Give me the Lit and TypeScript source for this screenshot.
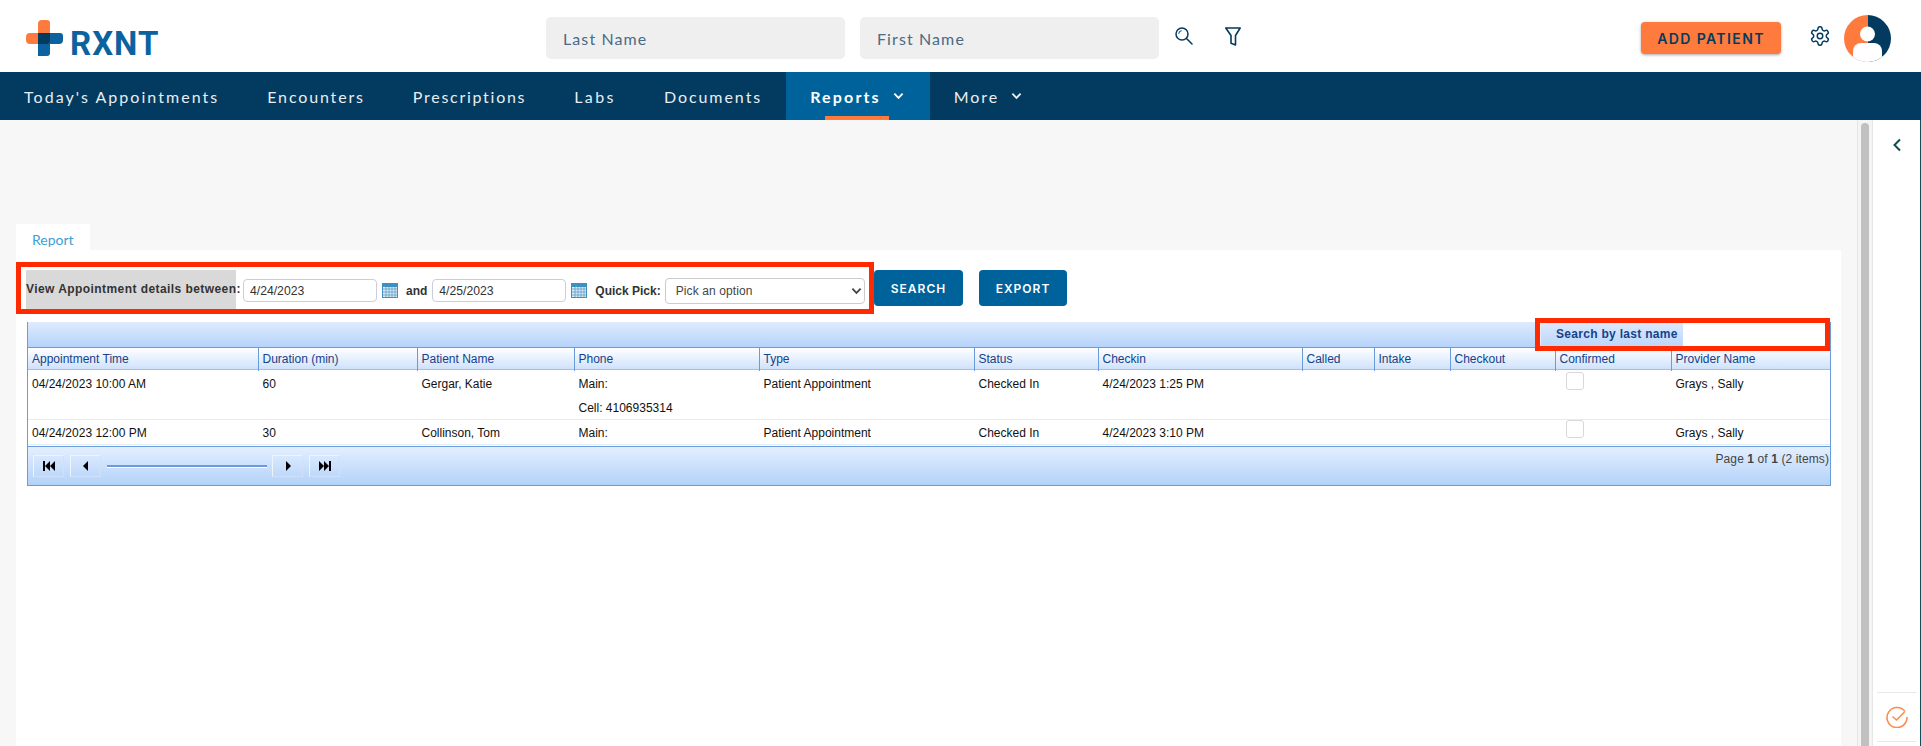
import { LitElement, html, css, svg } from "lit";
import { customElement } from "lit/decorators.js";

const NAV = [
  { t: "Today's Appointments", ls: 2.04 },
  { t: "Encounters", ls: 1.85 },
  { t: "Prescriptions", ls: 1.72 },
  { t: "Labs", ls: 2.4 },
  { t: "Documents", ls: 1.95 },
];
const COLS = ["Appointment Time", "Duration (min)", "Patient Name", "Phone", "Type", "Status", "Checkin", "Called", "Intake", "Checkout", "Confirmed", "Provider Name"];
const ROWS = [
  { time: "04/24/2023 10:00 AM", dur: "60", name: "Gergar, Katie", phone: ["Main:", "Cell: 4106935314"], checkin: "4/24/2023 1:25 PM" },
  { time: "04/24/2023 12:00 PM", dur: "30", name: "Collinson, Tom", phone: ["Main:"], checkin: "4/24/2023 3:10 PM" },
];

const chevron = html`<svg class="chev" viewBox="0 0 12 8" width="11" height="8"><path d="M1.5 1.5 6 6l4.5-4.5" fill="none" stroke="currentColor" stroke-width="2"/></svg>`;
const calendar = html`<svg class="cal" viewBox="0 0 16 15" width="16" height="15">
  <rect x=".5" y=".5" width="15" height="14" fill="#dcecf6" stroke="#3f8fc0"/>
  <rect x="1" y="1" width="14" height="3" fill="#3f8fc0"/>
  ${[6, 9, 12].map((y) => svg`<path d="M1 ${y}h14" stroke="#6fa9cf"/>`)}
  ${[4, 7, 10, 13].map((x) => svg`<path d="M${x} 4v10" stroke="#6fa9cf"/>`)}
</svg>`;

const pagerIcon = (d: string) => html`<button class="pg"><svg viewBox="0 0 12 10" width="12" height="10"><path d="${d}" fill="#000"/></svg></button>`;

@customElement("app-root")
export class AppRoot extends LitElement {
  static styles = css`
    :host { display: flex; flex-direction: column; width: 1921px; height: 746px; overflow: hidden; background: #fff; font-family: "Liberation Sans", Arial, sans-serif; font-size: 12px; }
    * { box-sizing: border-box; }
    .top { flex: 0 0 72px; display: flex; align-items: flex-start; padding: 0 30px 0 26px; background: #fff; }
    .logo { display: flex; align-items: flex-end; width: 520px; padding-top: 20px; height: 56px; gap: 7px; }
    .logo-text { font: 700 33px/24px Roboto, sans-serif; color: #0a639f; height: 24px; letter-spacing: 1px; }
    .name { width: 299px; height: 42px; margin-top: 17px; margin-right: 15px; background: #efefef; border: 0; border-radius: 5px; padding: 0 17px; font: 400 16px Lato, sans-serif; letter-spacing: 1.1px; color: #4a6a85; }
    .name::placeholder { color: #4a6a85; opacity: 1; }
    .ic-search { margin: 27px 0 0 1px; color: #033a5f; }
    .ic-filter { margin: 27px 0 0 32px; color: #033a5f; }
    .add { margin: 22px 0 0 auto; width: 140px; height: 32px; border: 0; border-radius: 4px; background: #ff7a3d; color: #033a5f; font: 600 14px Inter, sans-serif; letter-spacing: 1.4px; box-shadow: 0 1px 3px rgba(0,0,0,.35); padding: 0; }
    .ic-gear { margin: 25px 13px 0 28px; color: #033a5f; }
    .avatar { margin-top: 15px; }

    .nav { flex: 0 0 48px; display: flex; background: #033a5f; color: #e8eef3; font: 400 16px Lato, sans-serif; }
    .nav a { display: flex; align-items: center; padding: 0 24px; height: 48px; position: relative; white-space: nowrap; letter-spacing: 1.95px; }
    .nav a .chev { margin-left: 12px; }
    .nav a.on { background: #00629b; color: #fff; font-weight: 700; padding: 0 26px 0 24px; letter-spacing: 2.15px; }
    .nav a.on::after { content: ""; position: absolute; left: 39px; bottom: 0; width: 64px; height: 4px; background: #ff7a3d; }
    .chev { flex: none; }

    .body { flex: 1; display: flex; min-height: 0; }
    .main { flex: 0 0 1857px; display: flex; flex-direction: column; padding: 104px 16px 0; background: #f7f7f7; }
    .tab { width: 74px; height: 26px; background: #fff; padding: 7px 0 0 16px; color: #3ba0d8; font: 400 14px Lato, sans-serif; }
    .panel { flex: 1; background: #fff; padding-top: 12px; }
    .filter { display: flex; align-items: center; }
    .box { width: 858px; height: 52px; border: 5px solid #ff2a00; padding: 5px 0 0 5px; display: flex; align-items: center; color: #333; font-weight: 700; }
    .lbl { background: #d9d9d9; width: 210px; height: 39px; flex: none; line-height: 38px; white-space: nowrap; letter-spacing: .43px; align-self: flex-start; margin-top: -2px; }
    .date { height: 23px; border: 1px solid #ccd; border-radius: 4px; width: 134px; padding: 0 3px 0 6px; font: 400 12.2px "Liberation Sans", sans-serif; color: #333; }
    .d1 { margin-left: 7px; }
    .cal { margin: 0 0 0 5px; flex: none; }
    .and { margin: 0 5px 0 8px; }
    .qp { margin: 0 4px 0 8px; white-space: nowrap; }
    .sel { position: relative; flex: none; width: 200px; height: 26px; }
    select { appearance: none; width: 100%; height: 100%; border: 1px solid #ccc; border-radius: 4px; background: #fff; padding: 0 0 0 10px; font: 400 12px "Liberation Sans", sans-serif; color: #444; letter-spacing: .1px; }
    .sel .chev { position: absolute; right: 3px; top: 9px; color: #444; pointer-events: none; }
    .act { height: 36px; width: 89px; border: 0; border-radius: 4px; background: #00629b; color: #fff; font: 600 12px Inter, sans-serif; letter-spacing: 1px; padding: 0; }
    .act.e { margin-left: 16px; width: 88px; }

    .grid { position: relative; margin: 8px 0 0 11px; width: 1804px; border: 1px solid #6a9bdc; border-top: 0; color: #111; }
    .tool { height: 25px; background: linear-gradient(#deebfd, #b5d3fb); }
    .row { display: grid; grid-template-columns: 230px 159px 157px 185px 215px 124px 204px 72px 76px 105px 116px 159px; }
    .head { height: 23px; border-top: 1px solid #6a9bdc; border-bottom: 1px solid #9dc0ee; background: linear-gradient(#fff, #cfe2fb); color: #15428b; line-height: 23px; }
    .head span { padding-left: 3.5px; border-left: 1px solid #6a9bdc; white-space: nowrap; }
    .head span:first-child { border-left: 0; padding-left: 4px; }
    .cell { padding-left: 3.5px; line-height: 24px; padding-top: 2px; border-left: 1px solid transparent; white-space: nowrap; }
    .cell:first-child { border-left: 0; padding-left: 4px; }
    .r1 { height: 50px; border-bottom: 1px solid #e3edf7; }
    .r2 { height: 26px; }
    .r2 .cell { padding-top: 1px; height: 25px; border-bottom: 1px solid #e3edf7; }
    .r2 .cell.ck { padding-top: 0; }
    .cell.ck { padding-top: 2px; line-height: 0; }
    .cell input { appearance: none; display: block; margin: 0 0 0 6px; width: 18px; height: 18px; border: 1px solid #d8d8d8; border-radius: 3px; background: #fff; }
    .pager { height: 39px; border-top: 1px solid #6a9bdc; background: linear-gradient(#e4effe, #b3d2fa); display: flex; padding: 8px 0 0 5px; }
    .pg { width: 31px; height: 22px; border: 1px solid; border-color: #edf4fe #cfe1fa #cfe1fa #edf4fe; background: transparent; padding: 0; display: flex; align-items: center; justify-content: center; margin-right: 6px; }
    .track { width: 160px; height: 3px; background: #6a9bdc; border-bottom: 1px solid #fff; margin: 10px 5px 0 0; }
    .info { margin-left: auto; color: #444; padding: 0 1px 0 0; line-height: 24px; margin-top: -8px; letter-spacing: .1px; }
    .srch { position: absolute; left: 1507px; top: -4px; width: 295px; height: 33px; border: 5px solid #ff2a00; display: flex; }
    .srch label { width: 143px; flex: none; background: linear-gradient(#dce9fd, #bcd6fb); border-left: 1px solid #e8f1fe; padding-left: 15px; color: #15428b; font-weight: 700; line-height: 23px; white-space: nowrap; letter-spacing: .3px; }
    .srch input { flex: 1; min-width: 0; border: 0; background: #fff; }

    .sb { flex: 0 0 16px; background: #f4f4f4; border-left: 1px solid #e6e6e6; border-right: 1px solid #e6e6e6; padding: 3px 3px 0; }
    .thumb { height: 100%; background: #c1c1c1; border-radius: 4px 4px 0 0; }
    .side { flex: 1; background: #fff; border-right: 1px solid #14505c; display: flex; flex-direction: column; align-items: center; padding: 18px 4px 0; color: #0b4f4a; }
    .side .sp { flex: 1; }
    .done { width: 100%; height: 50px; border-top: 1px solid #e8e8e8; border-bottom: 1px solid #e8e8e8; display: flex; align-items: center; justify-content: center; margin-bottom: 4px; }
  `;

  render() {
    return html`
      <header class="top">
        <div class="logo">
          <svg viewBox="0 0 37 36" width="37" height="36">
            <path d="M16 0h5a3 3 0 0 1 3 3v21H4a4 4 0 0 1-4-4v-3a4 4 0 0 1 4-4h8V4a4 4 0 0 1 4-4z" fill="#ff7a3d"/>
            <path d="M12 13h22a3 3 0 0 1 3 3v4a4 4 0 0 1-4 4h-9v9a3 3 0 0 1-3 3h-9z" fill="#0a639f"/>
            <path d="M12 13h12v7a4 4 0 0 1-4 4h-8z" fill="#033a5f"/>
          </svg>
          <span class="logo-text">RXNT</span>
        </div>
        <input class="name" placeholder="Last Name" />
        <input class="name" placeholder="First Name" />
        <svg class="ic-search" viewBox="0 0 18 18" width="18" height="18" fill="none" stroke="currentColor" stroke-width="1.5"><circle cx="7" cy="7" r="6"/><path d="M11.5 11.5l5.5 5.5" stroke-linecap="round"/><path d="M3.7 6.8a3.2 3.2 0 0 1 3-3.1" stroke-width="1"/></svg>
        <svg class="ic-filter" viewBox="0 0 16 19" width="16" height="19" fill="none" stroke="currentColor" stroke-width="1.6" stroke-linejoin="round"><path d="M.8 1h14.4L10.5 8.5V18L6 16.3V8.5z"/></svg>
        <button class="add">ADD PATIENT</button>
        <svg class="ic-gear" viewBox="0 0 24 24" width="22" height="22" fill="none" stroke="currentColor" stroke-width="1.6"><path d="M12.22 2h-.44a2 2 0 0 0-2 2v.18a2 2 0 0 1-1 1.73l-.43.25a2 2 0 0 1-2 0l-.15-.08a2 2 0 0 0-2.73.73l-.22.38a2 2 0 0 0 .73 2.73l.15.1a2 2 0 0 1 1 1.72v.51a2 2 0 0 1-1 1.74l-.15.09a2 2 0 0 0-.73 2.73l.22.38a2 2 0 0 0 2.73.73l.15-.08a2 2 0 0 1 2 0l.43.25a2 2 0 0 1 1 1.73V20a2 2 0 0 0 2 2h.44a2 2 0 0 0 2-2v-.18a2 2 0 0 1 1-1.73l.43-.25a2 2 0 0 1 2 0l.15.08a2 2 0 0 0 2.73-.73l.22-.39a2 2 0 0 0-.73-2.73l-.15-.08a2 2 0 0 1-1-1.74v-.5a2 2 0 0 1 1-1.74l.15-.09a2 2 0 0 0 .73-2.73l-.22-.38a2 2 0 0 0-2.73-.73l-.15.08a2 2 0 0 1-2 0l-.43-.25a2 2 0 0 1-1-1.73V4a2 2 0 0 0-2-2z"/><circle cx="12" cy="12" r="3"/></svg>
        <svg class="avatar" viewBox="0 0 47 47" width="47" height="47">
          <defs><clipPath id="c"><circle cx="23.5" cy="23.5" r="23.5"/></clipPath></defs>
          <g clip-path="url(#c)">
            <rect width="24" height="47" fill="#ff7a3d"/>
            <rect x="24" width="23" height="47" fill="#033a5f"/>
            <circle cx="23.5" cy="19" r="7.5" fill="#fff"/>
            <path d="M9 47V36a8 8 0 0 1 8-8h13a8 8 0 0 1 8 8v11z" fill="#fff"/>
          </g>
        </svg>
      </header>
      <nav class="nav">
        ${NAV.map((n) => html`<a style="letter-spacing:${n.ls}px">${n.t}</a>`)}
        <a class="on">Reports ${chevron}</a>
        <a>More ${chevron}</a>
      </nav>
      <div class="body">
        <main class="main">
          <div class="tab">Report</div>
          <section class="panel">
            <div class="filter">
              <div class="box">
                <span class="lbl">View Appointment details between:</span>
                <input class="date d1" value="4/24/2023" />${calendar}
                <span class="and">and</span>
                <input class="date" value="4/25/2023" />${calendar}
                <span class="qp">Quick Pick:</span>
                <div class="sel"><select><option>Pick an option</option></select>${chevron}</div>
              </div>
              <button class="act">SEARCH</button>
              <button class="act e">EXPORT</button>
            </div>
            <div class="grid">
              <div class="tool"></div>
              <div class="row head">${COLS.map((c) => html`<span>${c}</span>`)}</div>
              ${ROWS.map((r, i) => html`
                <div class="row ${i === 0 ? "r1" : "r2"}">
                  <div class="cell">${r.time}</div>
                  <div class="cell">${r.dur}</div>
                  <div class="cell">${r.name}</div>
                  <div class="cell">${r.phone.map((p) => html`<div>${p}</div>`)}</div>
                  <div class="cell">Patient Appointment</div>
                  <div class="cell">Checked In</div>
                  <div class="cell">${r.checkin}</div>
                  <div class="cell"></div>
                  <div class="cell"></div>
                  <div class="cell"></div>
                  <div class="cell ck"><input type="checkbox" /></div>
                  <div class="cell">Grays , Sally</div>
                </div>`)}
              <div class="pager">
                ${pagerIcon("M0 0h2v10H0zM7 0v10L2 5zM12 0v10L7 5z")}
                ${pagerIcon("M8 0v10L3 5z")}
                <div class="track"></div>
                ${pagerIcon("M4 0v10l5-5z")}
                ${pagerIcon("M0 0v10l5-5zM5 0v10l5-5zM10 0h2v10h-2z")}
                <div class="info">Page <b>1</b> of <b>1</b> (2 items)</div>
              </div>
              <div class="srch"><label>Search by last name</label><input /></div>
            </div>
          </section>
        </main>
        <div class="sb"><div class="thumb"></div></div>
        <aside class="side">
          <svg viewBox="0 0 10 14" width="10" height="14" fill="none" stroke="currentColor" stroke-width="2"><path d="M8 1.5 2.5 7 8 12.5"/></svg>
          <div class="sp"></div>
          <div class="done">
            <svg viewBox="0 0 22 22" width="22" height="22" fill="none" stroke="#ff8a50" stroke-width="1.6"><path d="M19 5.5A10 10 0 1 0 21 11"/><path d="M6.5 10.5l4 3.5 8-8"/></svg>
          </div>
        </aside>
      </div>
    `;
  }
}
